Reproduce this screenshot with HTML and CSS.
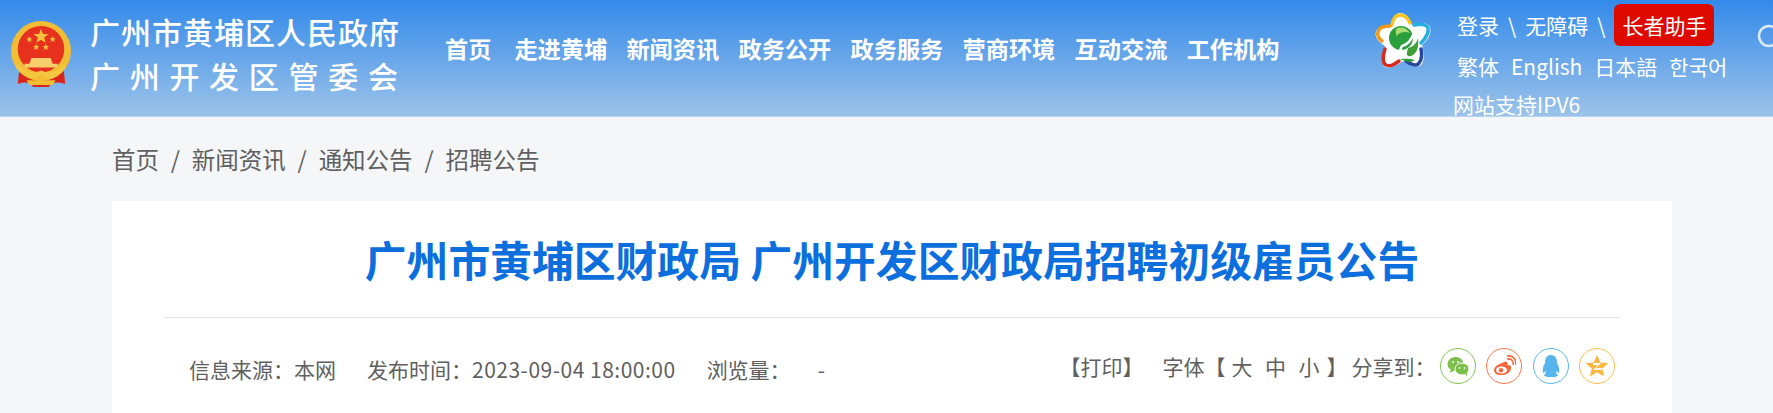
FILE: index.html
```html
<!DOCTYPE html>
<html lang="zh-CN">
<head>
<meta charset="utf-8">
<title>广州市黄埔区财政局 广州开发区财政局招聘初级雇员公告</title>
<link rel="stylesheet" href="styles.css">
</head>
<body>
<header class="top">
  <svg class="emblem" viewBox="0 0 64 70" aria-hidden="true">
    <path d="M10 48 L8 66 Q20 62 24 69 L40 69 Q44 62 57 66 L55 48Z" fill="#d9241c"/>
    <circle cx="32" cy="32" r="31" fill="#f1bd35"/>
    <circle cx="32" cy="30" r="24" fill="#e8301f"/>
    <path d="M32 9 l2 5.300 5.700.2-4.500 3.500 1.600 5.500-4.800-3.200-4.800 3.200 1.600-5.500-4.500-3.500 5.700-.2z" fill="#f4c640"/>
    <path d="M20 16.500 l.9 2.300 2.400.1-1.900 1.500.7 2.400-2.100-1.400-2.100 1.400.7-2.400-1.900-1.500 2.400-.1z" fill="#f4c640"/>
    <path d="M44 16.500 l.9 2.300 2.400.1-1.900 1.500.7 2.400-2.100-1.400-2.100 1.400.7-2.400-1.900-1.500 2.400-.1z" fill="#f4c640"/>
    <path d="M27 24.500 l.9 2.300 2.400.1-1.900 1.500.7 2.400-2.100-1.400-2.100 1.400.7-2.400-1.900-1.500 2.400-.1z" fill="#f4c640"/>
    <path d="M37 24.500 l.9 2.300 2.400.1-1.900 1.500.7 2.400-2.100-1.400-2.100 1.400.7-2.400-1.900-1.500 2.400-.1z" fill="#f4c640"/>
    <path d="M15 49 h34 v-4 h-5 l-2-6 h-20 l-2 6 h-5z" fill="#f6cf6a"/>
    <path d="M8 45 Q20 58 32 52 Q44 58 56 45 L58 49 Q44 66 32 57 Q20 66 6 49Z" fill="#f4c640"/>
    <path d="M17 62 h30 l-3 5 h-24z" fill="#f1bd35"/>
  </svg>
  <div class="site">
    <div class="site-a">广州市黄埔区人民政府</div>
    <div class="site-b">广州开发区管委会</div>
  </div>
  <nav class="nav">
    <a>首页</a><a>走进黄埔</a><a>新闻资讯</a><a>政务公开</a><a>政务服务</a><a>营商环境</a><a>互动交流</a><a>工作机构</a>
  </nav>
  <svg class="star" viewBox="0 0 70 70" aria-hidden="true">
    <path d="M35 8 C41 8 45 13 47 20 C53 17 63 17 65 22 C67 29 62 36 57 40 C59 47 60 56 56 60 C52 64 44 60 38 56 C32 60 26 64 20 62 C15 59 17 47 20 41 C14 37 9 32 11 27 C13 21 22 20 26 20 C27 14 30 8 35 8Z" fill="#fff"/>
    <g fill="none" stroke-width="3.500" stroke-linecap="round">
      <path d="M27 20 C28 14 31 10 35 10 C40 10 43 13 45 18" stroke="#f8c520"/>
      <path d="M25 21 C21 21 14 22 13 27 C12 30 13 33 17 36" stroke="#f49a16"/>
      <path d="M49 20 C54 19 62 19 63 23 C64 28 60 34 56 38" stroke="#27aee0"/>
      <path d="M20 44 C18 50 17 58 21 60 C26 62 30 59 34 56" stroke="#d52a1c"/>
      <path d="M41 56 C45 59 52 62 54 58 C57 55 57 48 56 44" stroke="#26479c"/>
    </g>
    <circle cx="36" cy="33" r="12" fill="#2b9f3c"/>
    <path d="M31 24 C36 21 42 23 45 28 C40 26 35 27 31 31Z" fill="#a9dd72"/>
    <path d="M43 43 C48 42 52 38 53 33 C54 42 52 49 46 51 C43 52 41 50 42 47Z" fill="#3f9f35"/>
    <path d="M35 55 C39 53 45 54 50 55 C46 58 41 57 38 55Z" fill="#2f9a3a"/>
    <path d="M37 41 C42 40 46 36 49 28 M37 41 L33 50" fill="none" stroke="#fff" stroke-width="2.500" stroke-linecap="round"/>
  </svg>
  <div class="tools">
    <div class="tools-row tools-main">
      <a>登录</a><span class="sep">\</span><a>无障碍</a><span class="sep">\</span><a class="elder">长者助手</a>
    </div>
    <div class="tools-row tools-lang">
      <a>繁体</a><a>English</a><a>日本語</a><a>한국어</a>
    </div>
    <div class="ipv6">网站支持IPV6</div>
  </div>
  <svg class="search" viewBox="0 0 24 24" aria-hidden="true">
    <circle cx="12" cy="12" r="10" fill="none" stroke="#dce9f8" stroke-width="2.500"/>
  </svg>
</header>
<main class="page">
  <div class="crumbs">
    <a>首页</a><span>/</span><a>新闻资讯</a><span>/</span><a>通知公告</a><span>/</span><a>招聘公告</a>
  </div>
  <article class="card">
    <h1 class="title">广州市黄埔区财政局 广州开发区财政局招聘初级雇员公告</h1>
    <div class="meta">
      <div class="meta-left">
        <span>信息来源：本网</span>
        <span>发布时间：<span class="date">2023-09-04 18:00:00</span></span>
        <span class="views">浏览量：<i>-</i></span>
      </div>
      <div class="meta-right">
        <span class="print">【打印】</span>
        <span class="size">字体【<b>大</b><b>中</b><b>小</b>】</span>
        <span class="share-label">分享到：</span>
        <span class="shares">
          <a class="share s-wx"><svg viewBox="0 0 24 24"><ellipse cx="9.500" cy="10" rx="8" ry="7" fill="#7cc04a"/><path d="M5 15 l-1 4 4-2.500z" fill="#7cc04a"/><ellipse cx="16" cy="15" rx="7" ry="6" fill="#7cc04a" stroke="#fff"/><path d="M19 20 l2 2.500 -.2-4z" fill="#7cc04a"/><circle cx="7" cy="8" r="1" fill="#fff"/><circle cx="12" cy="8" r="1" fill="#fff"/><circle cx="13.500" cy="14" r=".9" fill="#fff"/><circle cx="18.500" cy="14" r=".9" fill="#fff"/></svg></a>
          <a class="share s-wb"><svg viewBox="0 0 24 24"><path d="M10 9 Q15 6 15.500 9 Q15.500 11 15.500 11 Q20 11 19 15 Q17 21 9 21 Q2 21 2 16 Q2 12 10 9Z" fill="#f4683a"/><ellipse cx="9.500" cy="16" rx="5.500" ry="3.600" fill="#fff"/><circle cx="9" cy="16.200" r="2.200" fill="#f4683a"/><path d="M15 5 Q21 4 21.500 11" fill="none" stroke="#f4683a" stroke-width="1.600"/><path d="M15 2 Q24 1 24 11" fill="none" stroke="#f4683a" stroke-width="1.600"/></svg></a>
          <a class="share s-qq"><svg viewBox="0 0 24 24"><path d="M12 1 Q18 1 18 9 Q21 14 20 19 Q18 18 17 17 Q17 20 19 21 Q19 23 12 23 Q5 23 5 21 Q7 20 7 17 Q6 18 4 19 Q3 14 6 9 Q6 1 12 1Z" fill="#58b4ec"/></svg></a>
          <a class="share s-qz"><svg viewBox="0 0 24 24"><path d="M12 1 l3.300 7.400 8 .8-6 5.300 1.800 7.900-7.100-4.100-7.100 4.100 1.800-7.900-6-5.300 8-.8z" fill="#fbb740"/><path d="M8 9 h8 l-5 5 h5.500 l.5 2 h-9 l5-5 h-5z" fill="#fff"/></svg></a>
        </span>
      </div>
    </div>
  </article>
</main>
</body>
</html>
```
FILE: styles.css
```css
* { box-sizing: border-box; }
html, body { margin: 0; height: 413px; overflow: hidden; }
body {
  background: #f4f6f8;
  font-family: "Noto Sans CJK SC", "Liberation Sans", sans-serif;
  color: #606060;
}
.top {
  height: 117px;
  display: flex;
  background: linear-gradient(#338aea, #9cc3e9);
  border-bottom: 1px solid #b7d3ee;
  color: #fff;
  white-space: nowrap;
}
.emblem { width: 62px; height: 68px; margin: 20px 0 0 10px; flex: none; }
.site { margin: 9px 0 0 18px; width: 355px; flex: none; font-size: 30px; line-height: 44px; font-weight: 500; }
.site-a { letter-spacing: 1px; }
.site-b { letter-spacing: 9.7px; }
.nav { display: flex; margin: 28px 0 0 0; width: 920px; flex: none; font-size: 23.2px; font-weight: 700; line-height: 40px; }
.nav a { margin-right: 19.3px; }
.nav a:first-child { margin-right: 23px; }
.star { width: 70px; height: 70px; margin: 5px 0 0 0; flex: none; }
.tools { margin: 4px 0 0 22px; width: 302px; flex: none; font-size: 21px; }
.tools-row { display: flex; align-items: center; }
.tools-main { height: 42px; }
.tools-lang { height: 40px; gap: 12px; }
.sep { margin: 0 9px; }
.elder { background: #de0a00; border-radius: 6px; width: 100px; text-align: center; line-height: 42px; height: 42px; }
.ipv6 { margin: 3px 0 0 -4px; line-height: 30px; }
.search { width: 24px; height: 24px; margin: 24px 0 0 -2px; flex: none; }
.page { width: 1560px; margin: 0 0 0 112px; white-space: nowrap; }
.crumbs { height: 84px; display: flex; align-items: center; gap: 11.8px; font-size: 23.5px; }
.card { background: #fff; padding: 0 52px; height: 212px; }
.title { margin: 0; height: 117px; line-height: 116px; text-align: center; font-size: 41.8px; font-weight: 700; color: #0d6fdd; border-bottom: 1px solid #e2e2e2; }
.meta { display: flex; justify-content: space-between; align-items: center; height: 102px; padding: 0 5px 0 25px; font-size: 21px; }
.meta-left { display: flex; gap: 31px; }
.date { letter-spacing: .5px; }
.views i { font-style: normal; margin-left: 27px; }
.meta-right { display: flex; align-items: center; margin-bottom: 6px; }
.print { margin-right: 19px; }
.size { margin-right: 4px; }
.size b { font-weight: 400; margin-left: 6px; }
.size b + b { margin-left: 12.5px; }
.size b:last-of-type { margin-right: 7px; }
.share-label { margin-right: 4px; }
.shares { display: flex; gap: 10.5px; }
.share { width: 36px; height: 36px; border-radius: 50%; border: 1px solid; display: flex; align-items: center; justify-content: center; }
.share svg { width: 24px; height: 24px; }
.s-wx { border-color: #84c552; }
.s-wb { border-color: #f4774a; }
.s-qq { border-color: #5ab6ec; }
.s-qz { border-color: #fbbc4c; }
```
